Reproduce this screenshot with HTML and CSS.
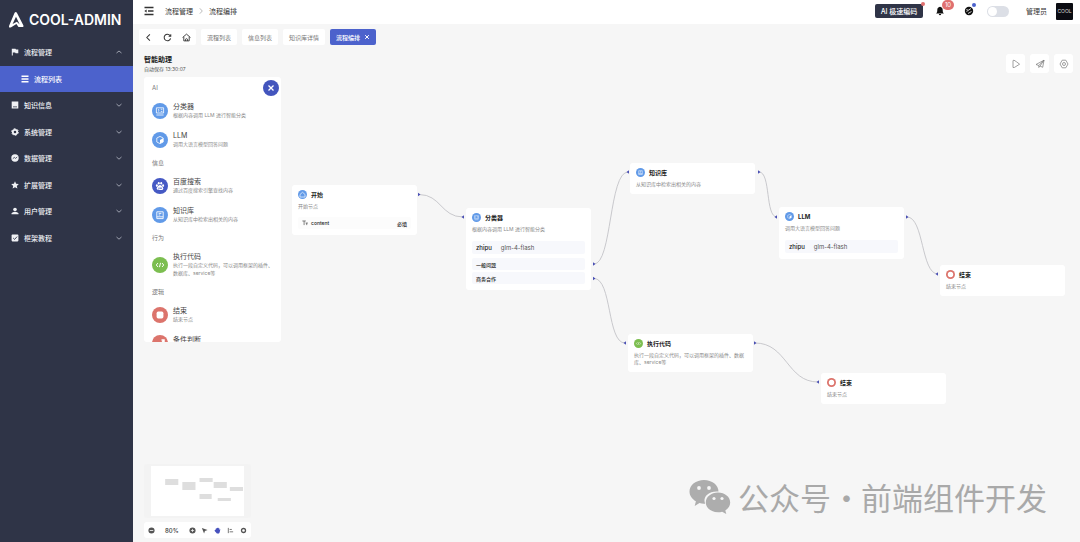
FILE: index.html
```html
<!DOCTYPE html>
<html lang="zh-CN">
<head>
<meta charset="utf-8">
<meta name="viewport" content="width=device-width, initial-scale=1">
<title>COOL-ADMIN</title>
<link rel="stylesheet" href="styles.css">
</head>
<body>
<svg class="sprite" aria-hidden="true">
  <symbol id="down" viewBox="0 0 8 8"><path d="M1.500 3 4 5.200 6.500 3" fill="none" stroke="currentColor" stroke-width=".8"/></symbol>
  <symbol id="up" viewBox="0 0 8 8"><path d="M1.500 5 4 3 6.500 5" fill="none" stroke="currentColor" stroke-width=".8"/></symbol>
  <symbol id="cross" viewBox="0 0 8 8"><path d="m1.500 1.500 5 5m0-5-5 5" fill="none" stroke="currentColor" stroke-width="1.300"/></symbol>
  <symbol id="classify" viewBox="-2 -2 20 20"><path d="M3.500 4h9v6.500h-9zM3.500 13h9M5.500 5.800 7 7.200 5.500 8.600M9 5.800h2M9 8.500h2" fill="none" stroke="currentColor" stroke-width="1"/></symbol>
  <symbol id="cube" viewBox="-2 -2 20 20"><path d="m8 3.500 4 2v5l-4 2-4-2v-5z" fill="none" stroke="currentColor" stroke-width="1"/><path d="M8 8 12 5.700v4.800l-4 2z" fill="currentColor"/></symbol>
  <symbol id="paw" viewBox="-1 -1 18 18"><g fill="currentColor"><ellipse cx="4.500" cy="7.500" rx="1.100" ry="1.500"/><ellipse cx="6.600" cy="4.900" rx="1.100" ry="1.500"/><ellipse cx="9.400" cy="4.900" rx="1.100" ry="1.500"/><ellipse cx="11.500" cy="7.500" rx="1.100" ry="1.500"/><path fill-rule="evenodd" d="M8 7c1.300 0 1.700 1 2.600 1.900 1 1 1.300 1.600 1 2.600-.4 1.200-1.600 1.200-3.600 1s-3.200.2-3.600-1c-.3-1 0-1.600 1-2.600C6.300 8 6.700 7 8 7zm-1.600 2.800v1.500h1V9.800zm2 0v1.500h1.400V9.800z"/></g></symbol>
  <symbol id="book" viewBox="-2 -2 20 20"><path d="M4 4h8v8.500H4zM4 10.300h8M6.300 6h3.400M6.300 8h2" fill="none" stroke="currentColor" stroke-width="1.100"/></symbol>
  <symbol id="code" viewBox="-2 -2 20 20"><path d="M5.500 5.500 3.300 8l2.200 2.500m5-5L12.700 8l-2.200 2.500M8.700 5.300l-1.400 5.400" fill="none" stroke="currentColor" stroke-width="1.200"/></symbol>
  <symbol id="stop" viewBox="0 0 16 16"><rect x="4.600" y="4.600" width="6.800" height="6.800" rx="1.600" fill="currentColor"/></symbol>
  <symbol id="ring" viewBox="0 0 16 16"><circle cx="8" cy="8" r="4.800" fill="currentColor"/></symbol>
  <symbol id="branch" viewBox="0 0 16 16"><path d="M4 11 7 8l2 1 3-4M9.500 5H12v2.500" fill="none" stroke="currentColor" stroke-width="1.500"/></symbol>
  <symbol id="home" viewBox="0 0 16 16"><path d="m3.500 8 4.500-4 4.500 4v4.500h-9z" fill="none" stroke="currentColor" stroke-width="1.200"/></symbol>
</svg>

<div class="app">
  <aside class="sidebar">
    <div class="brand">
      <svg class="brand-mark" viewBox="0 0 16 18"><path fill="#fff" fill-rule="evenodd" d="M6.600 1.700Q8 .3 9 1.900l6.200 12.200q.9 2.200-1.300 2L10.500 16l-2.100-2.900-5.200 3.200q-3 1-2-1.800zM8 5.800 4.600 13l4.300-2.300 2.800 2.800z"/></svg>
      <span>COOL-ADMIN</span>
    </div>
    <nav class="menu">
      <a class="menu-item" href="#"><svg class="ico" viewBox="0 0 8 8"><path fill="currentColor" d="M.8.800h1V7.600h-1zM1.800.8h2.700l.5.800h2.300v3.700H4.600l-.5-.8H1.800z"/></svg><span>流程管理</span><svg class="arrow"><use href="#up"/></svg></a>
      <a class="menu-item sub active" href="#"><svg class="ico" viewBox="0 0 8 8"><path stroke="currentColor" stroke-width="1.400" d="M.5 1.300h7M.5 4h7M.5 6.700h7"/></svg><span>流程列表</span></a>
      <a class="menu-item" href="#"><svg class="ico" viewBox="0 0 8 8"><path fill="currentColor" fill-rule="evenodd" d="M.7.600h6.600v6.800H.7zM2 5.500v.7h4v-.7z"/></svg><span>知识信息</span><svg class="arrow"><use href="#down"/></svg></a>
      <a class="menu-item" href="#"><svg class="ico" viewBox="0 0 8 8"><circle cx="4" cy="4" r="2.200" fill="none" stroke="currentColor" stroke-width="1.800"/><circle cx="4" cy="4" r="3.300" fill="none" stroke="currentColor" stroke-width="1" stroke-dasharray="1.900 1.550"/></svg><span>系统管理</span><svg class="arrow"><use href="#down"/></svg></a>
      <a class="menu-item" href="#"><svg class="ico" viewBox="0 0 8 8"><circle cx="4" cy="4" r="3.700" fill="currentColor"/><path d="m1.800 4.700 1.500-1.300 1.200 1 1.700-1.400" fill="none" stroke="#2f3447" stroke-width=".8"/></svg><span>数据管理</span><svg class="arrow"><use href="#down"/></svg></a>
      <a class="menu-item" href="#"><svg class="ico" viewBox="0 0 8 8"><path fill="currentColor" d="m4 .3 1.100 2.500 2.700.3-2 1.800.6 2.700L4 6.200 1.600 7.600l.6-2.700-2-1.800 2.700-.3z"/></svg><span>扩展管理</span><svg class="arrow"><use href="#down"/></svg></a>
      <a class="menu-item" href="#"><svg class="ico" viewBox="0 0 8 8"><circle cx="4" cy="2.500" r="1.800" fill="currentColor"/><path fill="currentColor" d="M.5 7.200V6.300Q1.500 4.800 4 4.800t3.500 1.500v.9z"/></svg><span>用户管理</span><svg class="arrow"><use href="#down"/></svg></a>
      <a class="menu-item" href="#"><svg class="ico" viewBox="0 0 8 8"><rect x=".6" y=".6" width="6.800" height="6.800" rx=".8" fill="currentColor"/><path d="m2.200 4 1.400 1.400 2.500-2.800" fill="none" stroke="#2f3447" stroke-width=".9"/></svg><span>框架教程</span><svg class="arrow"><use href="#down"/></svg></a>
    </nav>
  </aside>

  <div class="main">
    <header class="topbar">
      <button class="plain" aria-label="收起菜单"><svg class="fold" viewBox="0 0 10 10"><path d="M.5 1.500h9M4 5h5.500M.5 8.500h9" stroke="currentColor" stroke-width="1.400"/><path d="M.3 5 2.600 3.500v3z" fill="currentColor"/></svg></button>
      <nav class="crumbs"><span>流程管理</span><svg class="crumb-sep" viewBox="0 0 8 8"><path d="m2.800 1.300 2.500 2.700-2.500 2.700" fill="none" stroke="#aaa" stroke-width=".8"/></svg><span>流程编排</span></nav>
      <div class="tools">
        <button class="ai">AI 极速编码<i class="dot red"></i></button>
        <button class="plain bell" aria-label="通知"><svg class="tool-ico" viewBox="0 0 10 10"><path fill="#111" d="M5 .8c2 .3 2.700 1.700 2.700 3.200 0 2 .4 2.700 1.300 3.500H1c.9-.8 1.300-1.500 1.300-3.500C2.300 2.500 3 1.100 5 .8zM3.800 8h2.400Q6 9.300 5 9.300T3.800 8z"/></svg><i class="badge">10</i></button>
        <button class="plain theme" aria-label="主题"><svg class="tool-ico" viewBox="0 0 10 10"><circle cx="5" cy="5" r="4.200" fill="#111"/><path d="m2.500 5.500 4.500-3M4 7.500l3.500-2" stroke="#fff" stroke-width=".8"/><circle cx="3" cy="3.700" r=".6" fill="#fff"/></svg><i class="dot blue"></i></button>
        <input class="switch" type="checkbox" aria-label="暗黑模式">
        <span class="user">管理员</span>
        <span class="avatar">COOL</span>
      </div>
    </header>

    <div class="tabs">
      <div class="tab-nav">
        <button class="plain" aria-label="后退"><svg class="nav-ico" viewBox="0 0 16 16"><path d="M10.500 2.500 5 8l5.500 5.500" fill="none" stroke="currentColor" stroke-width="1.800"/></svg></button>
        <button class="plain" aria-label="刷新"><svg class="nav-ico" viewBox="0 0 16 16"><path d="M13.500 9.500A5.800 5.800 0 1 1 12.500 4.500M13.800 2v3.800H10" fill="none" stroke="currentColor" stroke-width="1.800"/></svg></button>
        <button class="plain" aria-label="首页"><svg class="nav-ico" viewBox="0 0 16 16"><path d="M1 8 8 2l7 6M3.200 7v7h9.600V7M6.300 14v-3q1.700-2 3.400 0v3" fill="none" stroke="currentColor" stroke-width="1.600"/></svg></button>
      </div>
      <button class="tab">流程列表</button>
      <button class="tab">信息列表</button>
      <button class="tab">知识库详情</button>
      <button class="tab current">流程编排<svg class="tab-x"><use href="#cross"/></svg></button>
    </div>

    <main class="canvas">
      <svg class="edges" aria-hidden="true">
        <g transform="translate(-133 -50)">
          <g fill="none" stroke="#bcbcc2" stroke-width=".8">
            <path d="M419 194.500C441 194.500 441 217 463 217"/>
            <path d="M594 264C612 264 609 172 628 172"/>
            <path d="M594 278.500C612 278.500 607 343 625 343"/>
            <path d="M759 172C771 172 765 217 777 217"/>
            <path d="M907 217C924 217 921 274 938 274"/>
            <path d="M755 343C787 343 787 382 818 382"/>
          </g>
          <g fill="#4a50b4">
            <path d="m418 192.700 2.500 1.800-2.500 1.800zM593 262.200l2.500 1.800-2.500 1.800zM593 276.700l2.500 1.800-2.500 1.800zM758 170.200l2.500 1.800-2.500 1.800zM906 215.200l2.500 1.800-2.500 1.800zM754 341.200l2.500 1.800-2.500 1.800z"/>
            <path d="m464 215.200-2.500 1.800 2.500 1.800zM629 170.200l-2.500 1.800 2.500 1.800zM626 341.200l-2.500 1.800 2.500 1.800zM777 215.200l-2.500 1.800 2.500 1.800zM938 272.200l-2.500 1.800 2.500 1.800zM819 380.200l-2.500 1.800 2.500 1.800z"/>
          </g>
        </g>
      </svg>

      <section class="node n-start">
        <h3><svg class="chip sky"><use href="#home"/></svg>开始</h3>
        <p>开始节点</p>
        <div class="field param"><svg class="type" viewBox="0 0 8 8"><path d="M.5 1.300h4.600M2.800 1.300v5.500M4.800 4h3M6.300 4v2.800" fill="none" stroke="#333" stroke-width=".8"/></svg><span>content</span><b>必填</b></div>
      </section>
      <section class="node n-classify">
        <h3><svg class="chip sky"><use href="#classify"/></svg>分类器</h3>
        <p>根据内容调用 LLM 进行智能分类</p>
        <div class="field model"><strong>zhipu</strong><span>glm-4-flash</span></div>
        <div class="options"><div class="field">一般问题</div><div class="field">商务合作</div></div>
      </section>
      <section class="node n-know">
        <h3><svg class="chip sky"><use href="#book"/></svg>知识库</h3>
        <p>从知识库中检索出相关的内容</p>
      </section>
      <section class="node n-llm">
        <h3><svg class="chip sky"><use href="#cube"/></svg>LLM</h3>
        <p>调用大语言模型回答问题</p>
        <div class="field model"><strong>zhipu</strong><span>glm-4-flash</span></div>
      </section>
      <section class="node n-end1">
        <h3><svg class="chip coral"><use href="#ring"/></svg>结束</h3>
        <p>结束节点</p>
      </section>
      <section class="node n-code">
        <h3><svg class="chip green"><use href="#code"/></svg>执行代码</h3>
        <p>执行一段自定义代码，可以调用框架的插件、数据库、service等</p>
      </section>
      <section class="node n-end2">
        <h3><svg class="chip coral"><use href="#ring"/></svg>结束</h3>
        <p>结束节点</p>
      </section>

      <div class="left">
        <h1>智能助理</h1>
        <p class="saved">自动保存 13:30:07</p>
        <div class="palette-wrap">
          <div class="palette">
            <h2>AI</h2>
            <div class="item"><svg class="disc sky"><use href="#classify"/></svg><div><h4>分类器</h4><p>根据内容调用 LLM 进行智能分类</p></div></div>
            <div class="item"><svg class="disc sky"><use href="#cube"/></svg><div><h4>LLM</h4><p>调用大语言模型回答问题</p></div></div>
            <h2>信息</h2>
            <div class="item"><svg class="disc indigo"><use href="#paw"/></svg><div><h4>百度搜索</h4><p>通过百度搜索引擎查找内容</p></div></div>
            <div class="item"><svg class="disc sky"><use href="#book"/></svg><div><h4>知识库</h4><p>从知识库中检索出相关的内容</p></div></div>
            <h2>行为</h2>
            <div class="item"><svg class="disc green"><use href="#code"/></svg><div><h4>执行代码</h4><p>执行一段自定义代码，可以调用框架的插件、数据库、service等</p></div></div>
            <h2>逻辑</h2>
            <div class="item"><svg class="disc coral"><use href="#stop"/></svg><div><h4>结束</h4><p>结束节点</p></div></div>
            <div class="item last"><svg class="disc coral"><use href="#branch"/></svg><h4>条件判断</h4></div>
          </div>
          <button class="close" aria-label="关闭"><svg class="close-x"><use href="#cross"/></svg></button>
        </div>
        <div class="bottom">
          <div class="minimap"><svg class="map" viewBox="0 0 92 50" preserveAspectRatio="none"><g fill="#dedede"><rect x="14" y="13" width="13" height="6"/><rect x="31" y="16" width="13" height="8"/><rect x="48" y="12" width="13" height="4"/><rect x="62" y="16" width="13" height="6"/><rect x="78" y="21" width="13" height="4"/><rect x="48" y="28" width="12" height="5"/><rect x="66" y="32" width="13" height="3"/></g></svg></div>
          <div class="zoombar">
            <button class="plain" aria-label="缩小"><svg class="zico" viewBox="0 0 8 8"><circle cx="4" cy="4" r="3.500" fill="#555"/><path d="M2 4h4" stroke="#fff" stroke-width=".9"/></svg></button>
            <span class="percent">80%</span>
            <button class="plain" aria-label="放大"><svg class="zico" viewBox="0 0 8 8"><circle cx="4" cy="4" r="3.500" fill="#555"/><path d="M2.200 4h3.600M4 2.200v3.600" stroke="#fff" stroke-width=".8"/></svg></button>
            <button class="plain" aria-label="选择"><svg class="zico" viewBox="0 0 8 8"><path d="m1 1 6.500 2.500-3 1-1 3z" fill="#555"/></svg></button>
            <button class="plain" aria-label="拖动"><svg class="zico" viewBox="0 0 8 8"><path d="M1.800 3.300V2h1V1.200h1.100V.8h1.200v.7h1V3l1.200-.3L6.500 6 5.700 7.300H3.300L.8 4.500V3.300z" fill="#4651bd"/></svg></button>
            <button class="plain" aria-label="对齐"><svg class="zico" viewBox="0 0 8 8"><path d="M1.500 1v6M3 2.800h2.500M3 5.500h4" stroke="#555" stroke-width=".9"/></svg></button>
            <button class="plain" aria-label="设置"><svg class="zico" viewBox="0 0 8 8"><circle cx="4" cy="4" r="2.300" fill="none" stroke="#555" stroke-width="1.500"/></svg></button>
          </div>
        </div>
      </div>

      <div class="actions">
        <button class="act" aria-label="运行"><svg class="act-ico" viewBox="0 0 10 10"><path d="M2 1.500v7h1.300L8.600 5.200 5.500 2.800 3 1.200z" fill="none" stroke="#888" stroke-width=".8" stroke-linejoin="round"/></svg></button>
        <button class="act" aria-label="发布"><svg class="act-ico" viewBox="0 0 10 10"><path d="M1 5.500 9 1.200 7.700 8.300 5 7 3.800 8.500V6.500zM3.800 6.500 9 1.200 5 7" fill="none" stroke="#777" stroke-width=".7" stroke-linejoin="round"/></svg></button>
        <button class="act" aria-label="设置"><svg class="act-ico" viewBox="0 0 10 10"><path d="M3.200 1.200h3.600L9 5 6.800 8.800H3.200L1 5z" fill="none" stroke="#888" stroke-width=".8" stroke-linejoin="round"/><circle cx="5" cy="5" r="1.500" fill="none" stroke="#888" stroke-width=".8"/></svg></button>
      </div>

      <div class="watermark">
        <svg class="wechat" viewBox="0 0 42 36"><path fill="#adadad" d="M15 1c8 0 14.500 5 14.500 11.500h-2C20 12.500 15 17 15.500 22q.2 1.500.7 2.700-3 .3-5.700-.7L5.700 27l1.200-4.700C3 20 .5 16.500.5 12.500.500 6 7 1 15 1z"/><path fill="#adadad" d="M29 13.500c6.800 0 12.200 4.400 12.200 9.900 0 3.300-2 6.200-4.900 8l1 3.600-4.200-2.300q-2 .6-4.100.6c-6.800 0-12.200-4.400-12.200-9.900s5.400-9.900 12.200-9.900z"/><g fill="#f6f6f6"><circle cx="10" cy="9" r="1.900"/><circle cx="20" cy="9" r="1.900"/><circle cx="25" cy="19.500" r="1.600"/><circle cx="33" cy="19.500" r="1.600"/></g></svg>
        <span>公众号</span><span class="mid">·</span><span>前端组件开发</span>
      </div>
    </main>
  </div>
</div>
</body>
</html>
```
FILE: styles.css
```css
* { box-sizing: border-box; }
body {
  margin: 0;
  font-family: Inter, "Noto Sans CJK SC", sans-serif;
  font-size: 6px;
  color: #333;
}
h1, h2, h3, h4, p { margin: 0; font-weight: 400; }
button { font: inherit; color: inherit; border: 0; padding: 0; margin: 0; cursor: pointer; }
svg { display: block; flex: none; }
i { font-style: normal; }
a { color: inherit; text-decoration: none; }
.sprite { position: absolute; width: 0; height: 0; }
.plain { background: none; position: relative; }

.app { display: flex; height: 100vh; overflow: hidden; background: #f6f6f6; }

.sidebar { width: 133px; flex: none; background: #2f3447; color: #fff; }
.brand {
  display: flex; align-items: center; gap: 5px;
  height: 39px; padding: 0 8px;
  font-size: 14px; font-weight: 600; white-space: nowrap;
}
.brand-mark { width: 16px; height: 18px; }
.menu { display: grid; grid-auto-rows: 1fr; height: 212px; }
.menu-item {
  display: flex; align-items: center; gap: 5px;
  padding: 0 10px 0 11px;
  font-size: 7px; font-weight: 500; color: #f0f1f5;
}
.menu-item.sub { padding-left: 21px; }
.menu-item.active { background: #4c62cc; color: #fff; }
.ico { width: 8px; height: 8px; }
.arrow { width: 8px; height: 8px; margin-left: auto; color: #b9bcc8; }

.main { flex: 1; min-width: 0; display: flex; flex-direction: column; }
.topbar {
  display: flex; align-items: center; gap: 11px;
  height: 24px; padding: 0 7px 2px 11px; background: #fff; flex: none;
}
.fold { width: 10px; height: 10px; }
.crumbs { display: flex; align-items: center; gap: 4px; font-size: 7px; }
.crumb-sep { width: 8px; height: 8px; }
.tools { display: flex; align-items: center; margin-left: auto; }
.tool-ico { width: 10px; height: 10px; }
.ai {
  position: relative; height: 14px; width: 48px; margin-right: 12px;
  border-radius: 2px; background: #2f3447; color: #fff;
  font-size: 7px; font-weight: 500; white-space: nowrap;
}
.dot { position: absolute; width: 4px; height: 4px; border-radius: 50%; }
.dot.red { top: -2px; right: -2px; background: #e0706f; }
.dot.blue { top: -3px; right: -2px; background: #4c62cc; }
.bell { margin-right: 19px; }
.badge {
  position: absolute; left: 7px; top: -6px;
  width: 12px; height: 10px; border-radius: 5px;
  background: #e0706f; color: #fff; font-size: 6px; line-height: 10px; text-align: center;
}
.theme { margin-right: 13px; }
.switch {
  appearance: none; width: 22px; height: 11px; margin: 0 17px 0 0;
  border-radius: 6px; background: #dcdfe6; padding: 1px;
}
.switch::before {
  content: ""; display: block; width: 9px; height: 9px; border-radius: 50%; background: #fff;
}
.user { font-size: 7px; margin-right: 9px; }
.avatar {
  display: flex; align-items: center; justify-content: center;
  width: 17px; height: 17px; border-radius: 1px;
  background: #0b0c12; color: #ddd; font-size: 5px;
}

.tabs { display: flex; align-items: center; gap: 5px; height: 26px; padding: 0 6px; flex: none; }
.tab-nav {
  display: flex; align-items: center; justify-content: space-around;
  width: 57px; height: 16px; border-radius: 2px; background: #fff;
}
.nav-ico { width: 9px; height: 9px; }
.tab {
  display: flex; align-items: center; gap: 4px;
  height: 16px; padding: 0 6px; border-radius: 2px;
  background: #fff; color: #777; white-space: nowrap;
}
.tab.current { background: #4c62cc; color: #fff; font-weight: 500; }
.tab-x { width: 6px; height: 6px; }

.canvas { position: relative; flex: 1; min-height: 0; overflow: hidden; }
.edges { position: absolute; left: 0; top: 0; width: 100%; height: 100%; }

.node {
  position: absolute; width: 125px; padding: 5px 6px 6px;
  background: #fff; border-radius: 3px;
}
.node h3 {
  display: flex; align-items: center; gap: 4px;
  height: 9px; font-size: 6px; font-weight: 700; color: #222;
}
.node p { margin-top: 4px; font-size: 5px; line-height: 7px; color: #888; }
.chip { width: 9px; height: 9px; border-radius: 50%; color: #fff; }
.field {
  display: flex; align-items: center; height: 12px; padding: 0 4px;
  border-radius: 2px; background: #f7f8fc; font-size: 5px; font-weight: 500; color: #222;
}
.param { margin-top: 7px; gap: 3px; background: #fcfcfc; }
.param b { margin-left: auto; font-weight: 500; }
.type { width: 6px; height: 6px; }
.model { margin-top: 8px; height: 13px; gap: 9px; font-size: 6px; font-weight: 400; }
.model strong { font-weight: 500; }
.model span { color: #555; }
.options { display: grid; gap: 2px; margin-top: 4px; }
.n-start { left: 159px; top: 135px; }
.n-classify { left: 333px; top: 158px; }
.n-know { left: 497px; top: 113px; }
.n-llm { left: 646px; top: 157px; }
.n-end1 { left: 807px; top: 215px; }
.n-code { left: 495px; top: 284px; }
.n-end2 { left: 688px; top: 323px; }

.sky { background: #619ae8; }
.indigo { background: #4559c4; }
.green { background: #7cbe50; }
.coral { background: #dc746c; }

.left {
  position: relative; width: 155px; height: 100%; padding: 5px 7px 4px 11px;
  display: flex; flex-direction: column;
}
.left h1 { font-size: 7px; line-height: 10px; font-weight: 700; color: #222; }
.saved { font-size: 5px; line-height: 8px; color: #555; }
.palette-wrap { position: relative; width: 137px; margin-top: 4px; }
.palette {
  height: 265px; padding: 2px 8px 0; overflow: hidden;
  background: #fff; border-radius: 3px;
}
.palette h2 { font-size: 6px; line-height: 17px; color: #777; }
.item { display: flex; align-items: center; gap: 5px; padding: 6px 0; }
.item h4 { font-size: 7px; line-height: 9px; color: #444; }
.item p { font-size: 5px; line-height: 8px; color: #888; }
.item.last { align-items: flex-start; }
.disc { width: 16px; height: 16px; border-radius: 50%; color: #fff; }
.close {
  position: absolute; right: 2px; top: 3px;
  display: flex; align-items: center; justify-content: center;
  width: 16px; height: 16px; border-radius: 50%; background: #4355bd; color: #fff;
}
.close-x { width: 8px; height: 8px; }

.bottom { display: grid; gap: 4px; width: 107px; margin-top: auto; }
.minimap { padding: 2px 7px; background: #f3f3f3; border-radius: 3px; }
.map { width: 100%; height: 50px; background: #fff; }
.zoombar {
  display: flex; align-items: center; justify-content: space-between;
  height: 16px; padding: 0 4px; background: #fff; border-radius: 3px;
}
.zico { width: 7px; height: 7px; }
.percent { width: 22px; text-align: center; font-weight: 500; }

.actions { position: absolute; right: 7px; top: 4px; display: flex; gap: 5px; }
.act {
  display: flex; align-items: center; justify-content: center;
  width: 19px; height: 19px; border-radius: 3px; background: #fff;
}
.act-ico { width: 10px; height: 10px; }

.watermark {
  position: absolute; right: 33px; bottom: 23px;
  display: flex; align-items: center;
  font-family: "Noto Sans CJK SC", sans-serif;
  font-size: 31px; line-height: 44px; font-weight: 400; color: #a9a9a9; white-space: nowrap;
}
.wechat { width: 42px; height: 36px; margin-right: 7px; }
.mid { width: 30px; text-align: center; }
```
